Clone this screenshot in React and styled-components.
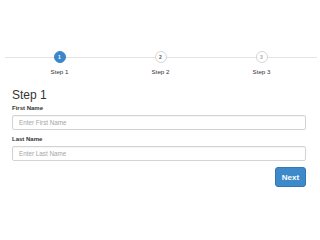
import React from "react";
import styled, { createGlobalStyle } from "styled-components";

const Global = createGlobalStyle`
  html, body { margin: 0; padding: 0; background: #fff; }
  body { font-family: "Liberation Sans", Arial, Helvetica, sans-serif; color: #333; }
  * { box-sizing: border-box; }
`;

const Page = styled.div`
  width: 320px;
  height: 240px;
  padding: 51px 14px 0 12px;
`;

const Stepper = styled.div`
  position: relative;
  display: grid;
  grid-template-columns: repeat(3, 101px);
  margin: 0 0 0 -3px;
  &::before {
    content: "";
    position: absolute;
    left: -4px;
    right: -11px;
    top: 6px;
    height: 1px;
    background: #e3e3e3;
  }
`;

const Step = styled.div`
  position: relative;
  display: flex;
  flex-direction: column;
  align-items: center;
  gap: 5px;
`;

const Circle = styled.div`
  width: 12px;
  height: 12px;
  border-radius: 50%;
  display: flex;
  align-items: center;
  justify-content: center;
  font-size: 5px;
  font-weight: bold;
  background: ${(p) => (p.$active ? "#3b86c8" : "#fff")};
  color: ${(p) => (p.$active ? "#fff" : p.$dim ? "#aaa" : "#555")};
  border: 1px solid ${(p) => (p.$active ? "#3b86c8" : "#d6d6d6")};
`;

const StepLabel = styled.div`
  font-size: 6.2px;
  color: #333;
  line-height: 8px;
`;

const Heading = styled.h2`
  margin: 12px 0 0 0;
  font-size: 12px;
  font-weight: 500;
  line-height: 14px;
  color: #333;
`;

const Field = styled.div`
  display: flex;
  flex-direction: column;
  margin-top: ${(p) => p.$top}px;
`;

const Label = styled.label`
  font-size: 6px;
  font-weight: bold;
  line-height: 8px;
  color: #333;
  margin-bottom: 3px;
`;

const Input = styled.input`
  width: 294px;
  height: 15px;
  border: 1px solid #d3d3d3;
  border-radius: 2px;
  padding: 0 6px;
  font-family: inherit;
  font-size: 6.3px;
  color: #555;
  outline: none;
  box-shadow: inset 0 1px 1px rgba(0,0,0,0.04);
  &::placeholder { color: #a5a5a5; }
`;

const Actions = styled.div`
  display: flex;
  justify-content: flex-end;
  width: 294px;
  margin-top: 6px;
`;

const Button = styled.button`
  width: 31px;
  height: 20px;
  border: 1px solid #3477b8;
  border-radius: 3px;
  background: #3d89ca;
  color: #fff;
  font-family: inherit;
  font-size: 8px;
  font-weight: bold;
  padding: 0;
`;

export default function App() {
  return (
    <Page>
      <Global />
      <Stepper>
        <Step>
          <Circle $active>1</Circle>
          <StepLabel>Step 1</StepLabel>
        </Step>
        <Step>
          <Circle>2</Circle>
          <StepLabel>Step 2</StepLabel>
        </Step>
        <Step>
          <Circle $dim>3</Circle>
          <StepLabel>Step 3</StepLabel>
        </Step>
      </Stepper>
      <Heading>Step 1</Heading>
      <Field $top={2}>
        <Label>First Name</Label>
        <Input placeholder="Enter First Name" />
      </Field>
      <Field $top={5}>
        <Label>Last Name</Label>
        <Input placeholder="Enter Last Name" />
      </Field>
      <Actions>
        <Button>Next</Button>
      </Actions>
    </Page>
  );
}
